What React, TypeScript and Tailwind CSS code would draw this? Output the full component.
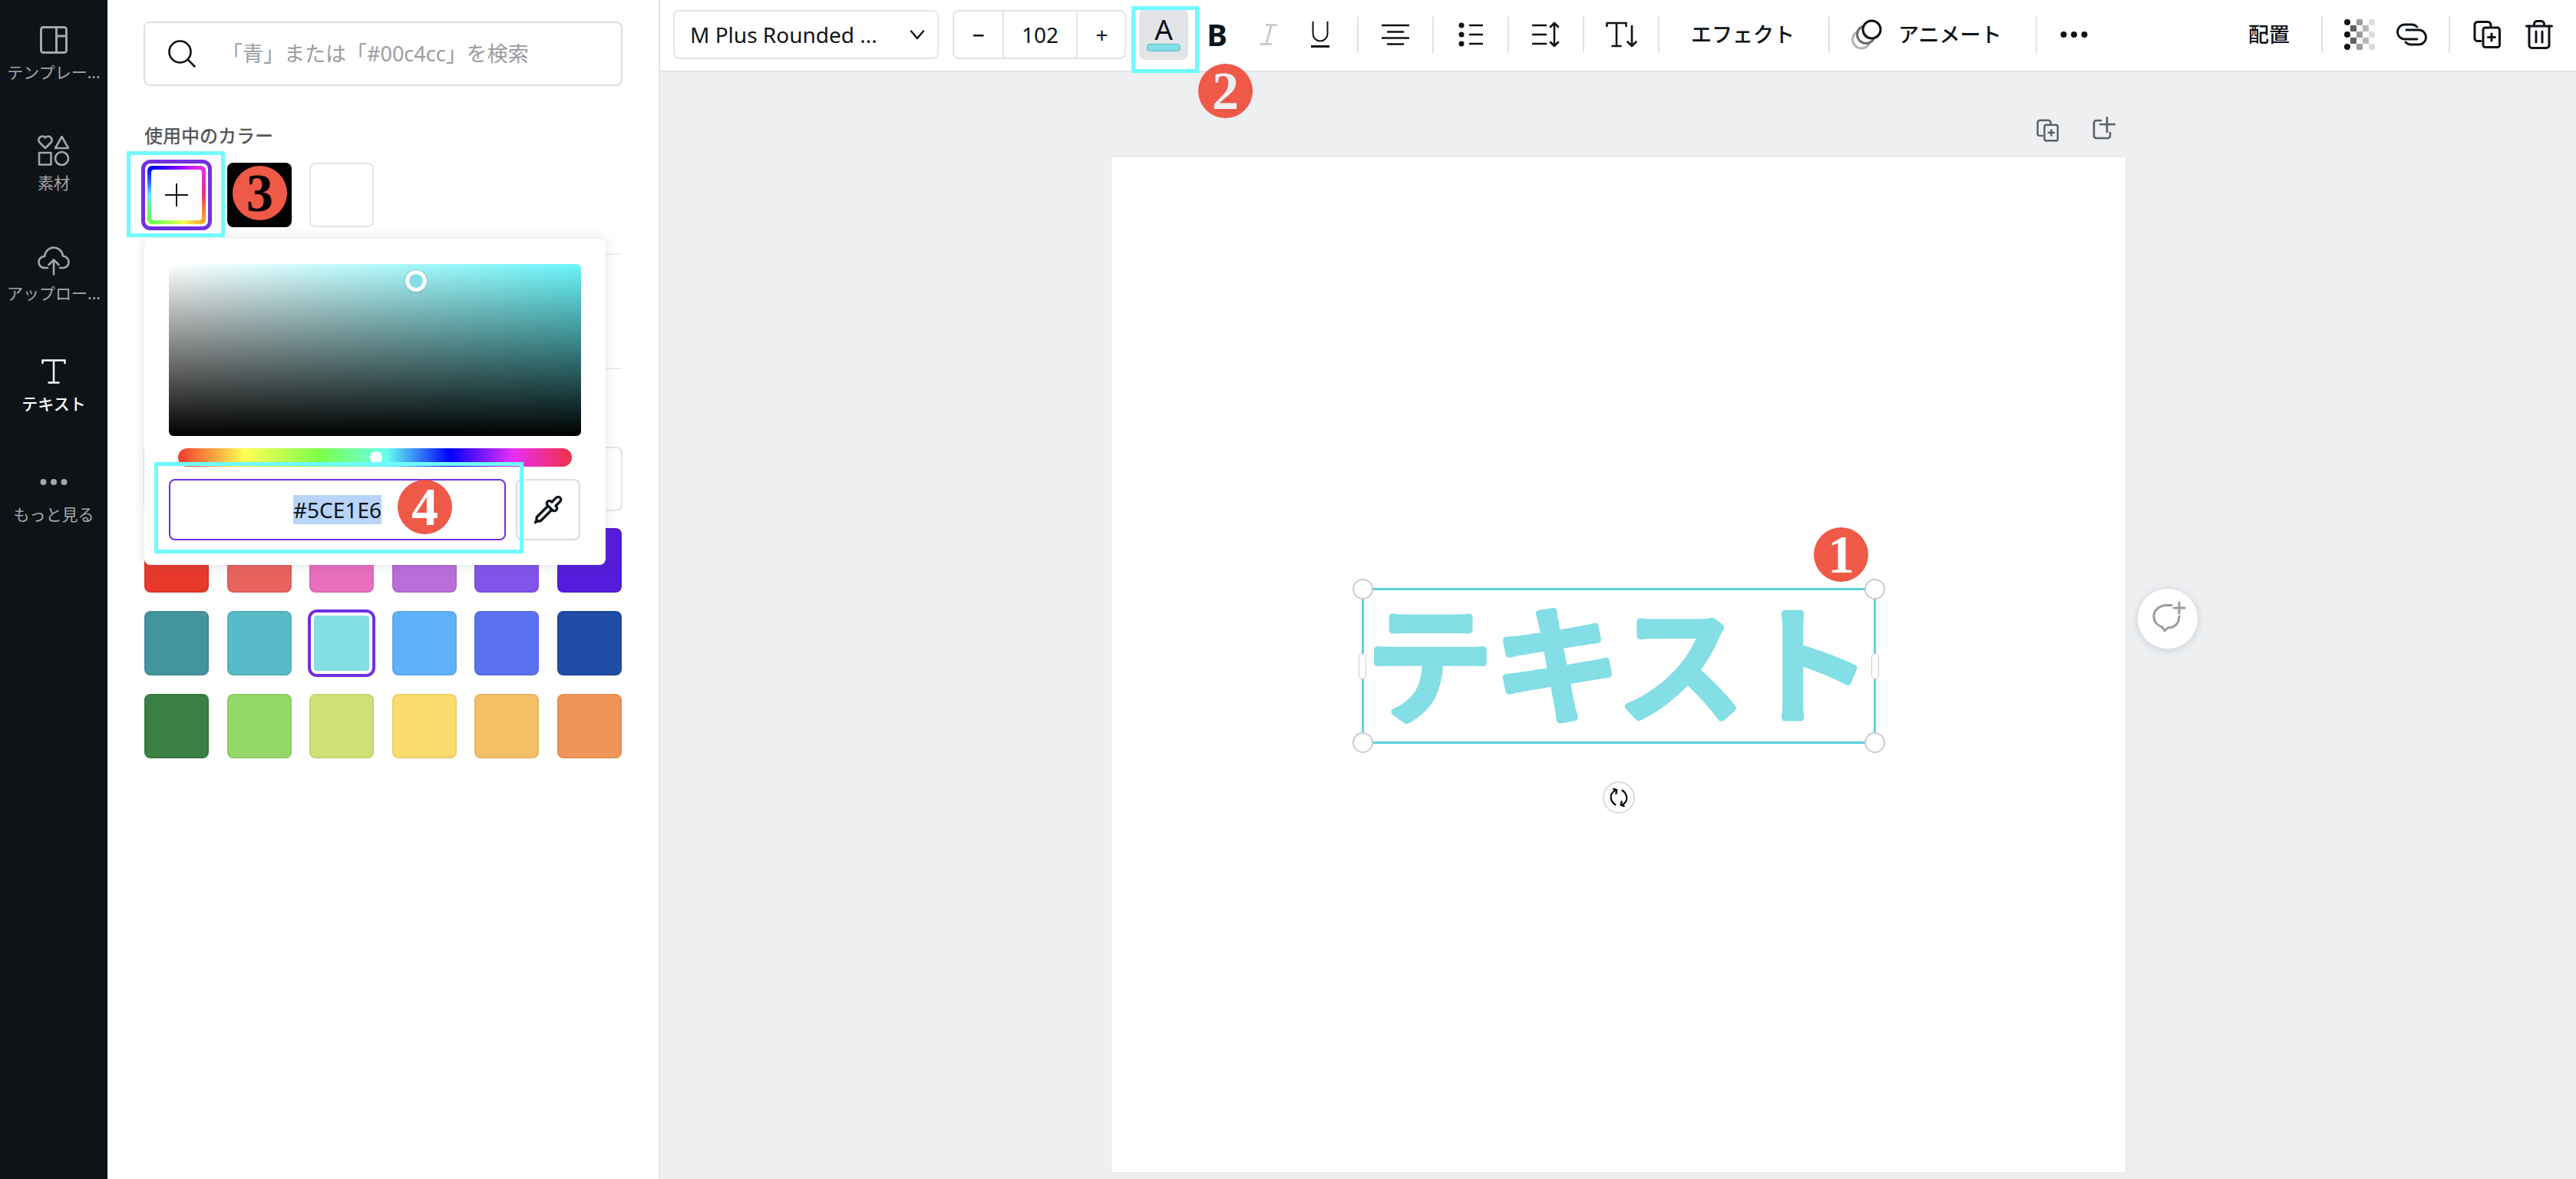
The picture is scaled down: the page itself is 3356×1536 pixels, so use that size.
import React from 'react';
import { Pipette } from 'lucide-react';

const INK = '#0e1318';

const SWATCHES = [
  ['#e8392c', '#e9635f', '#e96ebd', '#bb6edb', '#8354ea', '#551ddb'],
  ['#43959d', '#57bbc8', '#83dee5', '#5fb1f9', '#5a72f0', '#1f4ca5'],
  ['#3a7f44', '#95d86a', '#cfe075', '#f9dc6b', '#f5bf66', '#f09559'],
];

function SideItem({ label, active, children }: { label: string; active?: boolean; children: React.ReactNode }) {
  return (
    <div className={`h-[144px] flex flex-col items-center ${active ? 'text-white' : 'text-[#a4a6a8]'}`}>
      <div className="h-[44px] flex items-center justify-center">{children}</div>
      <div className={`mt-[6px] text-[21px] leading-[28px] whitespace-nowrap ${active ? 'font-medium' : ''}`}>{label}</div>
    </div>
  );
}

function Sidebar() {
  return (
    <div className="w-[140px] shrink-0 bg-[#0e1318] pt-[30px]">
      <SideItem label="テンプレー...">
        <svg width="36" height="36" viewBox="0 0 36 36" fill="none" stroke="currentColor" strokeWidth="3">
          <rect x="1.5" y="1.5" width="33" height="33" rx="3" />
          <path d="M21.5 2v32M21.5 13h13" />
        </svg>
      </SideItem>
      <SideItem label="素材">
        <svg width="42" height="40" viewBox="0 0 42 40" fill="none" stroke="currentColor" strokeWidth="2.6" strokeLinejoin="round">
          <path d="M10 17 2.5 9.5C-.5 5.500 3 1.500 6.500 1.500c1.500 0 2.800.8 3.500 2 .7-1.200 2-2 3.500-2 3.500 0 7 4 4 8z" />
          <path d="M31.500 2 40 17H23z" />
          <rect x="2" y="23" width="15.500" height="15.500" />
          <circle cx="31.500" cy="30.500" r="8.500" />
        </svg>
      </SideItem>
      <SideItem label="アップロー...">
        <svg width="42" height="38" viewBox="0 0 42 38" fill="none" stroke="currentColor" strokeWidth="2.6" strokeLinecap="round" strokeLinejoin="round">
          <path d="M13 28H9.500C4 28 1.500 24 1.500 20.500 1.500 16 5 13 9 13 10 6 15 1.500 21 1.500S32 6 33 12.500c4.500.5 7.500 4 7.500 8 0 4-3 7.500-7.500 7.500h-4" />
          <path d="M21 36.500V18M14.500 24 21 17.500 27.500 24" />
        </svg>
      </SideItem>
      <SideItem label="テキスト" active>
        <svg width="32" height="32" viewBox="0 0 32 32" fill="none" stroke="currentColor" strokeWidth="2.4">
          <path d="M1.500 6V1.500h29V6M16 1.500v29M8.500 30.500h15" />
        </svg>
      </SideItem>
      <SideItem label="もっと見る">
        <svg width="36" height="10" viewBox="0 0 36 10" fill="currentColor">
          <circle cx="4.500" cy="5" r="4" />
          <circle cx="18" cy="5" r="4" />
          <circle cx="31.500" cy="5" r="4" />
        </svg>
      </SideItem>
    </div>
  );
}

function ColorPopover() {
  return (
    <div className="absolute left-[48px] top-[311px] w-[601px] h-[425px] bg-white rounded-lg px-[32px] pt-[33px] shadow-[0_0_16px_rgba(64,87,109,0.18)]">
      <div className="relative h-[224px] rounded-md bg-[linear-gradient(to_top,#000,transparent),linear-gradient(to_right,#fff,#6af5fa)]">
        <div className="absolute left-[308px] top-[8px] w-[28px] h-[28px] rounded-full border-[5px] border-white bg-[#83dee5] shadow-[0_0_2px_rgba(0,0,0,0.4)]" />
      </div>
      <div className="relative mt-[16px] mx-[12px] h-[24px] rounded-full bg-[linear-gradient(to_right,#ef3b2d_0%,#ffff55_17%,#7bff4a_36%,#66fff0_53%,#0000ff_69%,#e82ef5_85%,#ef3045_100%)]">
        <div className="absolute left-[250px] top-[4px] w-[16px] h-[16px] rounded-full bg-white" />
      </div>
      <div className="mt-[16px] flex gap-[13px]">
        <div className="w-[439px] h-[80px] rounded-lg border-2 border-[#7130e0] flex items-center justify-center text-[28px] text-[#0e1318]">
          <span className="bg-[#b7d4fb] leading-[38px]">#5CE1E6</span>
        </div>
        <div className="w-[84px] h-[80px] rounded-lg border-2 border-[#dcdee1] flex items-center justify-center">
          <Pipette size={40} strokeWidth={2} color={INK} />
        </div>
      </div>
    </div>
  );
}

function ColorPanel() {
  return (
    <div className="relative w-[720px] shrink-0 bg-white border-r-2 border-[#e3e4e7] pl-[48px] pr-[48px] pt-[28px]">
      <div className="-mx-px h-[84px] rounded-lg border-2 border-[#dddfe2] flex items-center pl-[30px]">
        <svg width="36" height="36" viewBox="0 0 36 36" fill="none" stroke={INK} strokeWidth="2.600" strokeLinecap="round">
          <circle cx="15.500" cy="15.500" r="14" />
          <path d="M25.500 25.500 34.500 34.500" />
        </svg>
        <span className="ml-[34px] text-[27px] text-[#9a9ca0] whitespace-nowrap">「青」または「#00c4cc」を検索</span>
      </div>

      <div className="mt-[49px] text-[24px] leading-[32px] font-medium text-[#55575a]">使用中のカラー</div>

      <div className="mt-[19px] grid grid-cols-[repeat(6,84px)] gap-x-[23.6px]">
        <div className="relative h-[84px]">
          <div className="absolute -inset-[4px] rounded-xl border-[5px] border-[#7130e0]" />
          <div className="absolute inset-[4px] rounded-md bg-[conic-gradient(#7d00ff,#ea2ee6_12%,#ef2f6f_25%,#f7a52e_37%,#f5ff50_46%,#6aff50_62%,#60ecff_75%,#0000ff_88%,#7d00ff)] p-[5px]">
            <div className="h-full rounded-sm bg-white flex items-center justify-center">
              <svg width="32" height="32" viewBox="0 0 32 32" stroke={INK} strokeWidth="2">
                <path d="M16 1v30M1 16h30" />
              </svg>
            </div>
          </div>
        </div>
        <div className="h-[84px] rounded-lg bg-black" />
        <div className="h-[84px] rounded-lg border-2 border-[#e3e4e7]" />
      </div>

      <div className="mt-[34px] h-[2px] bg-[#ecedee]" />
      <div className="mt-[147px] h-[2px] bg-[#ecedee]" />
      <div className="mt-[101px] -mx-px h-[84px] rounded-lg border-2 border-[#e3e4e7]" />

      <div className="mt-[22px] grid grid-cols-[repeat(6,84px)] gap-x-[23.6px] gap-y-[24px]">
        {SWATCHES.flat().map((color) =>
          color === '#83dee5' ? (
            <div key={color} className="relative h-[84px]">
              <div className="absolute -inset-x-[2px] -inset-y-[2px] rounded-xl border-[4px] border-[#7130e0]" />
              <div className="absolute inset-x-[6px] inset-y-[6px] rounded-[4px] bg-[#83dee5]" />
            </div>
          ) : (
            <div
              key={color}
              className="h-[84px] rounded-lg border-2 border-black/5"
              style={{ backgroundColor: color }}
            />
          ),
        )}
      </div>

      <ColorPopover />
    </div>
  );
}

function Divider() {
  return <div className="w-[2px] h-[48px] shrink-0 bg-[#e1e2e6]" />;
}

function IconButton({ width, children }: { width: string; children: React.ReactNode }) {
  return <div className={`${width} h-[48px] shrink-0 flex items-center justify-center`}>{children}</div>;
}

function CopyIcon({ className, color = INK }: { className: string; color?: string }) {
  return (
    <svg className={className} viewBox="0 0 36 36" fill="none" stroke={color} strokeWidth="3" strokeLinecap="round">
      <path d="M23 7V5.500a4 4 0 0 0-4-4H6a4 4 0 0 0-4 4V23a3.500 3.500 0 0 0 3.500 3.500H10" />
      <rect x="13" y="9" width="21.500" height="25.500" rx="3" />
      <path d="M24 17v9M19.500 21.500h9" />
    </svg>
  );
}

function Toolbar() {
  return (
    <div className="h-[94px] shrink-0 bg-white border-b-2 border-[#e2e3e6] flex items-center pl-[17px] pr-[14px] pb-[2px] text-[#0e1318]">
      <div className="w-[346px] h-[64px] shrink-0 rounded-lg border-2 border-[#e3e4e7] flex items-center justify-between pl-[20px] pr-[16px]">
        <span className="text-[28px] whitespace-nowrap">M Plus Rounded ...</span>
        <svg width="20" height="14" viewBox="0 0 20 14" fill="none" stroke={INK} strokeWidth="2.400" strokeLinecap="round" strokeLinejoin="round">
          <path d="M2 2.500 10 12l8-9.500" />
        </svg>
      </div>

      <div className="ml-[18px] w-[226px] h-[64px] shrink-0 rounded-lg border-2 border-[#e3e4e7] flex items-center text-[28px]">
        <div className="w-[63px] text-center font-semibold">−</div>
        <div className="w-[98px] h-full border-x-2 border-[#e3e4e7] flex items-center justify-center">102</div>
        <div className="flex-1 text-center pl-[2px]">+</div>
      </div>

      <div className="ml-[17px] w-[64px] h-[66px] shrink-0 rounded-lg bg-[#e3e4e8] flex flex-col items-center">
        <span className="text-[37px] leading-[38px] mt-[7px]">A</span>
        <div className="w-[44px] h-[10px] rounded-[4px] bg-[#83dee5] border border-[#5cbcc5]" />
      </div>

      <div className="ml-[4px] w-[67px] h-[48px] shrink-0 flex items-center justify-center text-[40px] font-bold leading-none">B</div>
      <IconButton width="w-[67px]">
        <svg width="24" height="28" viewBox="0 0 24 28" fill="none" stroke="#c4c6c9" strokeWidth="2.600">
          <path d="M8 1.500h15M1 26.500h15M15.500 1.500 8.500 26.500" />
        </svg>
      </IconButton>
      <IconButton width="w-[67px]">
        <svg width="24" height="34" viewBox="0 0 24 34" fill="none" stroke={INK} strokeWidth="2">
          <path d="M2.500 0v16a9.500 9.500 0 0 0 19 0V0" />
          <path d="M0 32.500h24" strokeWidth="3" />
        </svg>
      </IconButton>

      <div className="ml-[15px]">
        <Divider />
      </div>
      <IconButton width="w-[96px]">
        <svg width="36" height="28" viewBox="0 0 36 28" stroke={INK} strokeWidth="2.600" strokeLinecap="round">
          <path d="M1 2h34M8 10.500h20M1 18.500h34M8 26.500h20" />
        </svg>
      </IconButton>
      <Divider />
      <IconButton width="w-[96px]">
        <svg width="32" height="32" viewBox="0 0 32 32" fill={INK} stroke={INK} strokeWidth="2.600" strokeLinecap="round">
          <circle cx="4" cy="4" r="3.500" stroke="none" />
          <circle cx="4" cy="16" r="3.500" stroke="none" />
          <circle cx="4" cy="28" r="3.500" stroke="none" />
          <path d="M15 4h16M15 16h16M15 28h16" />
        </svg>
      </IconButton>
      <Divider />
      <IconButton width="w-[96px]">
        <svg width="36" height="34" viewBox="0 0 36 34" fill="none" stroke={INK} strokeWidth="2.600" strokeLinecap="round" strokeLinejoin="round">
          <path d="M1 5h17M1 17h17M1 29h17" />
          <path d="M29 2v30M24 7l5-5 5 5M24 27l5 5 5-5" />
        </svg>
      </IconButton>
      <Divider />
      <IconButton width="w-[96px]">
        <svg width="41" height="34" viewBox="0 0 41 34" fill="none" stroke={INK} strokeWidth="2.600" strokeLinecap="round" strokeLinejoin="round">
          <path d="M1.500 6V2h25v4M14 2v30M8.500 32h11" />
          <path d="M34 6v26M28.500 26.500 34 32l5.500-5.500" />
        </svg>
      </IconButton>
      <Divider />

      <div className="w-[220px] shrink-0 pr-[3px] text-center text-[27px] font-medium">エフェクト</div>
      <Divider />

      <div className="w-[268px] shrink-0 flex items-center pl-[28px] gap-[21px]">
        <svg width="40" height="40" viewBox="0 0 40 40" fill="#fff" strokeWidth="3">
          <circle cx="13" cy="26.500" r="11.500" stroke="#b4b4b4" />
          <circle cx="19" cy="20" r="11.500" stroke="#6b6d70" />
          <circle cx="26.500" cy="13.500" r="11.500" stroke={INK} />
        </svg>
        <span className="text-[27px] font-medium whitespace-nowrap">アニメート</span>
      </div>
      <Divider />

      <IconButton width="w-[96px]">
        <svg width="36" height="10" viewBox="0 0 36 10" fill={INK}>
          <circle cx="4.500" cy="5" r="4" />
          <circle cx="18" cy="5" r="4" />
          <circle cx="31.500" cy="5" r="4" />
        </svg>
      </IconButton>

      <div className="flex-1" />

      <div className="w-[136px] shrink-0 text-center text-[27px] font-medium">配置</div>
      <Divider />

      <div className="ml-[14px]">
        <IconButton width="w-[68px]">
          <svg width="40" height="40" viewBox="0 0 40 40">
            <g fill={INK}>
              <circle cx="4" cy="4" r="4" />
              <circle cx="4" cy="20" r="4" />
              <circle cx="4" cy="36" r="4" />
            </g>
            <g fill="#9b9c9e">
              <rect x="16" y="0" width="8" height="8" rx="2" />
              <rect x="16" y="16" width="8" height="8" rx="1" />
              <rect x="16" y="32" width="8" height="8" rx="2" />
            </g>
            <g fill="#dcdcdd">
              <rect x="32" y="0" width="8" height="8" rx="2" />
              <rect x="32" y="16" width="8" height="8" rx="2" />
              <rect x="32" y="32" width="8" height="8" rx="2" />
            </g>
            <g fill="#5f6063">
              <rect x="8" y="8" width="8" height="8" />
              <rect x="8" y="24" width="8" height="8" />
            </g>
            <g fill="#b8b9ba">
              <rect x="24" y="8" width="8" height="8" />
              <rect x="24" y="24" width="8" height="8" />
            </g>
          </svg>
        </IconButton>
      </div>
      <IconButton width="w-[68px]">
        <svg width="40" height="30" viewBox="0 0 40 30" fill="none" stroke={INK} strokeWidth="2.800" strokeLinecap="round">
          <path d="M27 5C25 3 23 2 20 2H11a9.500 9.500 0 0 0 0 19h16" />
          <path d="M13 9h16a9.500 9.500 0 0 1 0 19H19c-3 0-5-1-7-3" />
        </svg>
      </IconButton>
      <div className="ml-[14px]">
        <Divider />
      </div>
      <div className="ml-[14px]">
        <IconButton width="w-[68px]">
          <CopyIcon className="w-[36px] h-[36px]" />
        </IconButton>
      </div>
      <IconButton width="w-[68px]">
        <svg width="36" height="38" viewBox="0 0 36 38" fill="none" stroke={INK} strokeWidth="3" strokeLinecap="round" strokeLinejoin="round">
          <path d="M1.500 8h33M11.500 8V5.500a4 4 0 0 1 4-4h5a4 4 0 0 1 4 4V8" />
          <path d="M5 8v25a3.500 3.500 0 0 0 3.500 3.500h19A3.500 3.500 0 0 0 31 33V8" />
          <path d="M14 15v14M22 15v14" />
        </svg>
      </IconButton>
    </div>
  );
}

function CornerHandle({ className }: { className: string }) {
  return <div className={`absolute w-[27px] h-[27px] rounded-full bg-white border-2 border-[#c8cbd0] ${className}`} />;
}

function SelectedText() {
  return (
    <div className="absolute left-[326px] top-[561px] w-[670px] h-[203px] border-[3px] border-[#5ed3da] flex items-center justify-center">
      <svg width="664" height="197" viewBox="0 0 664 197" className="overflow-visible">
        <text
          x="332"
          y="160"
          textAnchor="middle"
          fontSize="166"
          fontWeight="500"
          fill="#83dee5"
          stroke="#83dee5"
          strokeWidth="9"
          strokeLinejoin="round"
          strokeLinecap="round"
        >
          テキスト
        </text>
      </svg>
      <CornerHandle className="-left-[15px] -top-[15px]" />
      <CornerHandle className="-right-[15px] -top-[15px]" />
      <CornerHandle className="-left-[15px] -bottom-[15px]" />
      <CornerHandle className="-right-[15px] -bottom-[15px]" />
      <div className="absolute -left-[7px] top-1/2 -translate-y-1/2 w-[10px] h-[34px] rounded-full bg-white border border-[#c8cbd0]" />
      <div className="absolute -right-[7px] top-1/2 -translate-y-1/2 w-[10px] h-[34px] rounded-full bg-white border border-[#c8cbd0]" />
      <div className="absolute -bottom-[94px] left-1/2 -translate-x-1/2 w-[42px] h-[42px] rounded-full bg-white border-2 border-[#d9dbde] flex items-center justify-center">
        <svg width="26" height="26" viewBox="0 0 24 24" fill="none" stroke="#000" strokeWidth="2">
          <path d="M8.500 3C4 5 2 9 2.500 12.500 3 16 5 19 8.500 21" />
          <path d="M5 1.500 9.500 3 8.500 8" />
          <path d="M15.500 21C20 19 22 15 21.500 11.500 21 8 19 5 15.500 3" />
          <path d="M19 22.500 14.500 21 15.500 16" />
        </svg>
      </div>
    </div>
  );
}

function Workspace() {
  return (
    <div className="relative flex-1 bg-[#edeff1] flex flex-col items-center pt-[58px]">
      <div className="w-[1321px] h-[53px] flex justify-end items-start gap-[44px] pr-[13px] text-[#5a5f66]">
        <CopyIcon className="w-[29px] h-[30px] mt-[3px]" color="#5a5f66" />
        <svg width="30" height="31" viewBox="0 0 30 31" fill="none" stroke="#5a5f66" strokeWidth="2.600" strokeLinecap="round">
          <path d="M11 5H5a3 3 0 0 0-3 3v17a3 3 0 0 0 3 3h15a3 3 0 0 0 3-3v-4" />
          <path d="M19 1v19M10 10h19" />
        </svg>
      </div>
      <div className="relative w-[1321px] h-[1322px] bg-white shadow-[0_0_2px_rgba(64,87,109,0.1)]">
        <SelectedText />
      </div>
      <div className="absolute left-[1924px] top-[672px] w-[80px] h-[80px] rounded-full bg-white border border-[#dfe1e4] shadow-[0_2px_10px_rgba(64,87,109,0.18)] flex items-center justify-center">
        <svg width="48" height="48" viewBox="0 0 48 48" fill="none" stroke="#9a9da1" strokeWidth="3" strokeLinecap="round" strokeLinejoin="round">
          <path d="M29 6.500h-6C13 6.500 6 13 6 21c0 7 5 12 11 14l3 5 4-4c9 0 15-6 15-15" />
          <path d="M39 3v14M32 10h14" />
        </svg>
      </div>
    </div>
  );
}

function Highlight({ className }: { className: string }) {
  return <div className={`absolute border-[5px] border-[#6ffbff] ${className}`} />;
}

function Badge({ className, digitColor, children }: { className: string; digitColor: string; children: React.ReactNode }) {
  return (
    <div
      className={`absolute w-[71px] h-[71px] rounded-full bg-[#ef5948] flex items-center justify-center [font-family:'Liberation_Serif',serif] font-bold text-[70px] leading-none ${className}`}
      style={{ color: digitColor }}
    >
      {children}
    </div>
  );
}

export default function App() {
  return (
    <div className="relative w-[3356px] h-[1536px] overflow-hidden flex bg-white [font-family:'Noto_Sans','Noto_Sans_CJK_JP',sans-serif]">
      <Sidebar />
      <ColorPanel />
      <div className="flex-1 flex flex-col">
        <Toolbar />
        <Workspace />
      </div>

      <Highlight className="left-[165px] top-[197px] w-[128px] h-[112px]" />
      <Highlight className="left-[1474px] top-[8px] w-[88px] h-[87px]" />
      <Highlight className="left-[201px] top-[602px] w-[481px] h-[119px]" />

      <Badge className="left-[2363px] top-[687px]" digitColor="#ffffff">1</Badge>
      <Badge className="left-[1561px] top-[83px]" digitColor="#edeff1">2</Badge>
      <Badge className="left-[303px] top-[216px]" digitColor="#000000">3</Badge>
      <Badge className="left-[518px] top-[625px]" digitColor="#ffffff">4</Badge>
    </div>
  );
}
